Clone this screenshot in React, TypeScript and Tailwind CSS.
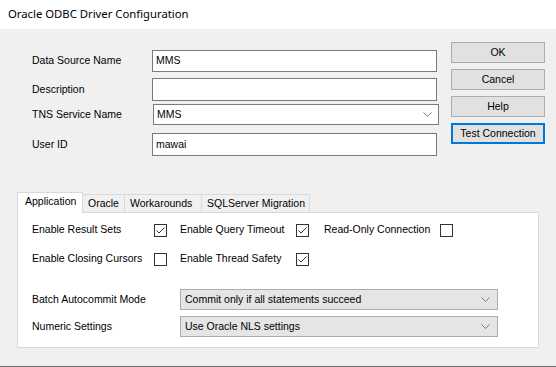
import React from "react";

const Chevron = () => (
  <svg width="9" height="5" viewBox="0 0 9 5" className="shrink-0">
    <path d="M0.5 0.5 L4.5 4.5 L8.5 0.5" fill="none" stroke="#707070" strokeWidth="0.9" />
  </svg>
);

const Check = ({ checked }: { checked: boolean }) => (
  <div className="w-[13px] h-[13px] border border-[#333333] bg-white flex items-center justify-center shrink-0">
    {checked && (
      <svg width="11" height="11" viewBox="0 0 11 11">
        <path d="M1.5 5.5 L4 8 L9.5 2.5" fill="none" stroke="#333333" strokeWidth="1" />
      </svg>
    )}
  </div>
);

const Btn = ({ label, focus }: { label: string; focus?: boolean }) => (
  <div
    className={
      focus
        ? "w-[94px] h-[21px] bg-[#e1e1e1] border-2 border-[#0078d7] flex items-center justify-center whitespace-nowrap"
        : "w-[94px] h-[21px] bg-[#e1e1e1] border border-[#adadad] flex items-center justify-center whitespace-nowrap"
    }
  >
    {label}
  </div>
);

export default function App() {
  return (
    <div
      className="w-[556px] h-[367px] bg-[#f0f0f0] text-[10.5px] text-black overflow-hidden flex flex-col whitespace-nowrap"
      style={{ fontFamily: '"Liberation Sans", Arial, sans-serif' }}
    >
      <div
        className="h-[29px] bg-white flex items-center pl-[8px] text-[11.3px] text-black shrink-0"
        style={{ fontFamily: '"Noto Sans", "Open Sans", sans-serif' }}
      >
        Oracle ODBC Driver Configuration
      </div>

      <div className="flex items-start pt-[13px]">
        <div className="flex flex-col pl-[32px] pt-[8px] w-[451px]">
          <div className="flex items-center h-[22px]">
            <div className="w-[120px]">Data Source Name</div>
            <div className="w-[285px] h-[22px] bg-white border border-[#7a7a7a] flex items-center pl-[3px]">MMS</div>
          </div>
          <div className="flex items-center h-[23px] mt-[6px]">
            <div className="w-[120px]">Description</div>
            <div className="w-[285px] h-[23px] bg-white border border-[#7a7a7a]"></div>
          </div>
          <div className="flex items-center h-[21px] mt-[3px]">
            <div className="w-[121px]">TNS Service Name</div>
            <div className="w-[286px] h-[21px] bg-white border border-[#7a7a7a] flex items-center justify-between pl-[3px] pr-[6px]">
              <span>MMS</span>
              <Chevron />
            </div>
          </div>
          <div className="flex items-center h-[23px] mt-[8px]">
            <div className="w-[120px]">User ID</div>
            <div className="w-[285px] h-[23px] bg-white border border-[#7a7a7a] flex items-center pl-[3px]">mawai</div>
          </div>
        </div>
        <div className="flex flex-col gap-[6px]">
          <Btn label="OK" />
          <Btn label="Cancel" />
          <Btn label="Help" />
          <Btn label="Test Connection" focus />
        </div>
      </div>

      <div className="pl-[17px] mt-[35px]">
        <div className="flex items-end h-[21px]">
          <div className="h-[21px] px-[7px] pb-[2px] bg-white border border-b-0 border-[#d9d9d9] flex items-center relative z-10 top-[1px] w-[66px]">
            Application
          </div>
          <div className="h-[18px] px-[5px] border border-b-0 border-l-0 border-[#d9d9d9] flex items-center w-[42px]">Oracle</div>
          <div className="h-[18px] px-[5px] border border-b-0 border-l-0 border-[#d9d9d9] flex items-center w-[77px]">Workarounds</div>
          <div className="h-[18px] px-[5px] border border-b-0 border-l-0 border-[#d9d9d9] flex items-center w-[108px]">SQLServer Migration</div>
        </div>
        <div className="w-[522px] h-[136px] bg-white border border-[#d9d9d9] pl-[14px] pt-[10px] flex flex-col">
          <div className="flex items-center h-[14px]">
            <div className="w-[122px]">Enable Result Sets</div>
            <Check checked />
            <div className="w-[13px]" />
            <div className="w-[116px]">Enable Query Timeout</div>
            <Check checked />
            <div className="w-[15px]" />
            <div className="w-[116px]">Read-Only Connection</div>
            <Check checked={false} />
          </div>
          <div className="flex items-center h-[14px] mt-[15px]">
            <div className="w-[122px]">Enable Closing Cursors</div>
            <Check checked={false} />
            <div className="w-[13px]" />
            <div className="w-[116px]">Enable Thread Safety</div>
            <Check checked />
          </div>
          <div className="flex items-center h-[21px] mt-[23px]">
            <div className="w-[148px]">Batch Autocommit Mode</div>
            <div className="w-[318px] h-[21px] bg-[#e5e5e5] border border-[#adadad] flex items-center justify-between pl-[4px] pr-[7px]">
              <span>Commit only if all statements succeed</span>
              <Chevron />
            </div>
          </div>
          <div className="flex items-center h-[21px] mt-[6px]">
            <div className="w-[148px]">Numeric Settings</div>
            <div className="w-[318px] h-[21px] bg-[#e5e5e5] border border-[#adadad] flex items-center justify-between pl-[4px] pr-[7px]">
              <span>Use Oracle NLS settings</span>
              <Chevron />
            </div>
          </div>
        </div>
      </div>
      <div className="mt-[18px] h-[1px] bg-[#6d6d6d] w-full shrink-0" />
    </div>
  );
}
